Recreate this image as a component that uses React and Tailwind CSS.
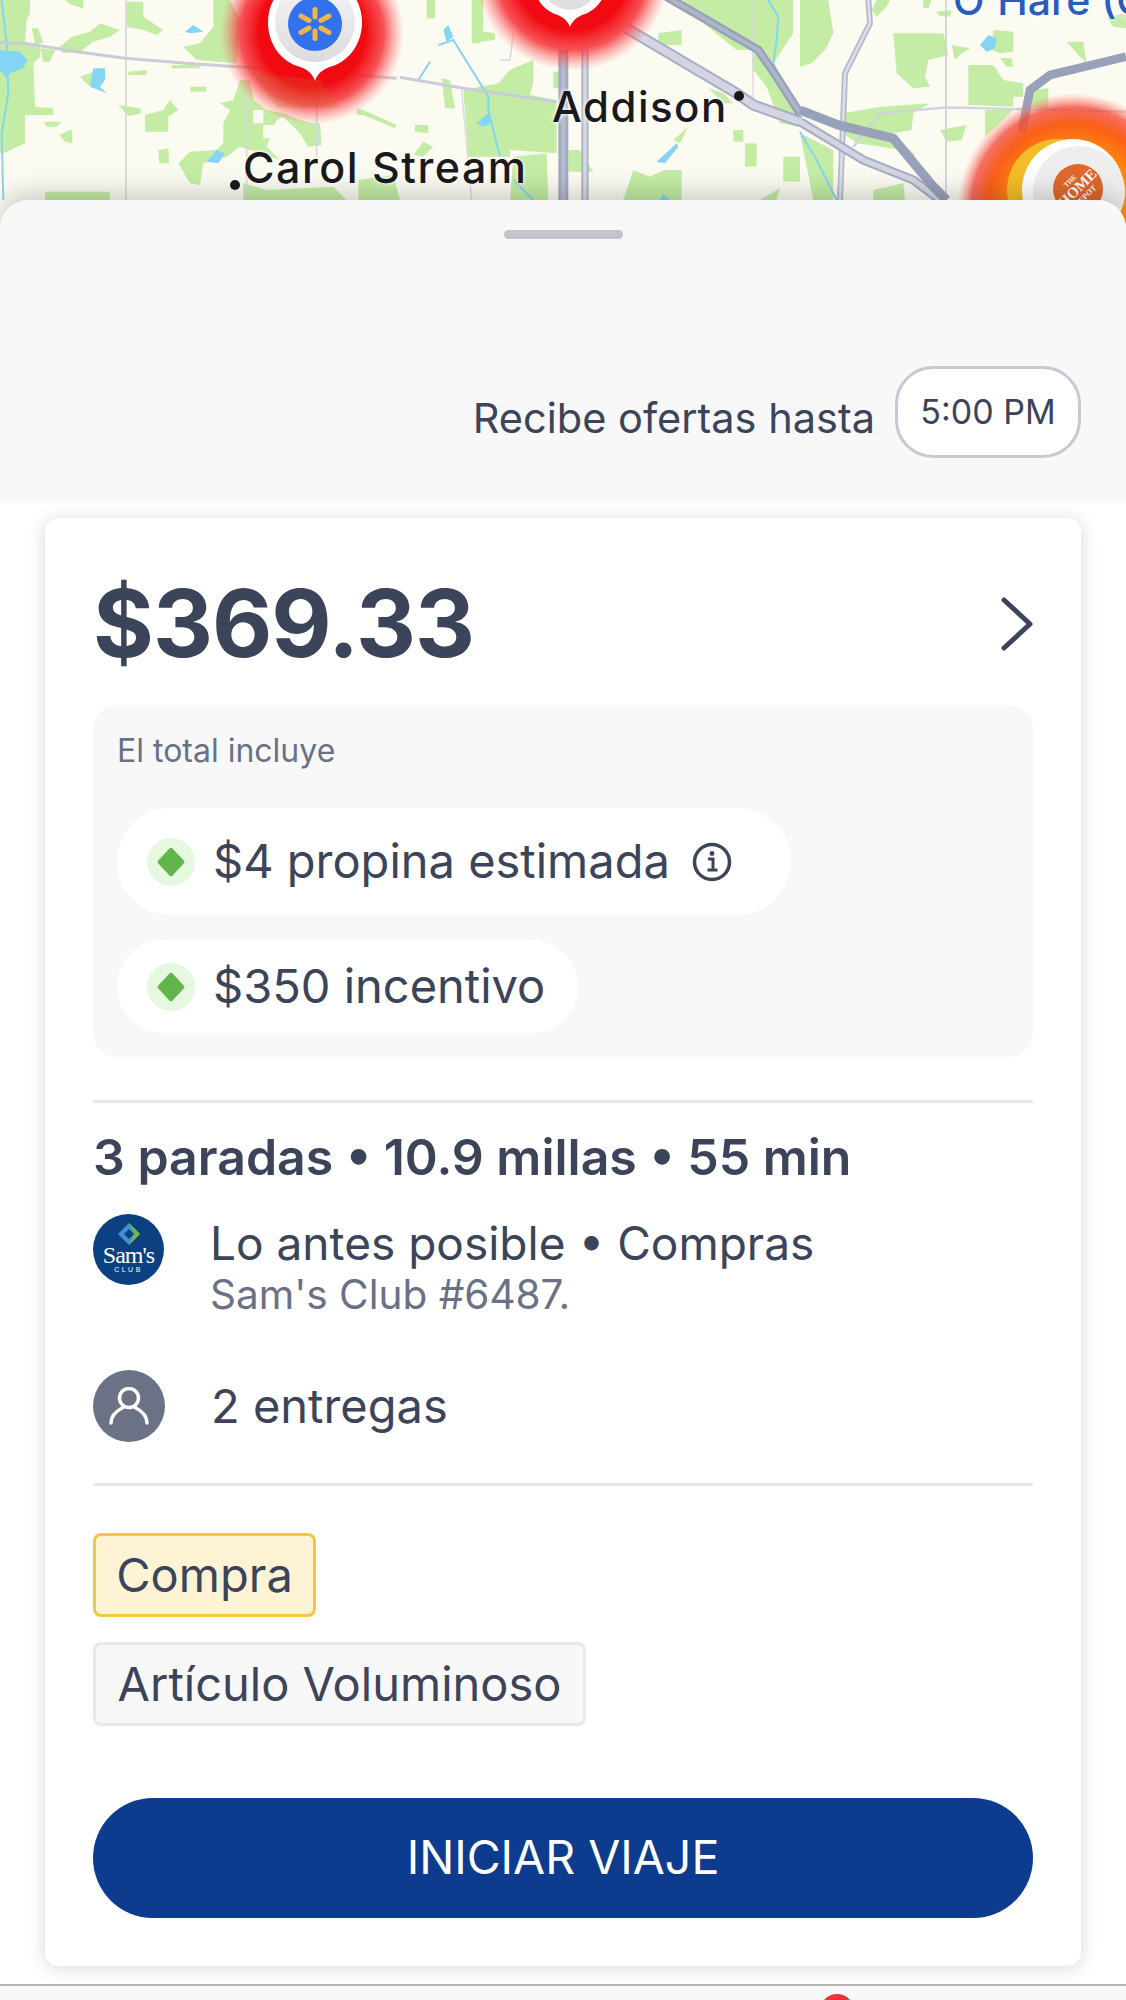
const GREEN = '#c4eca4'
const WATER = '#86d4f3'

// map patches, traced in 3x crop coordinates (left, middle and right third of the map)
const greensLeft = [
  '20,0 90,0 90,40 80,60 75,130 120,130 120,170 100,190 105,320 160,325 160,345 75,345 75,430 10,460 0,460 0,0',
  '95,85 115,85 130,130 105,130', '120,145 165,150 150,185 130,185',
  '175,145 215,110 270,95 300,70 330,80 360,90 330,110 280,125 240,155 190,160',
  '195,0 250,0 250,25 215,15', '380,5 430,5 430,50 490,90 470,105 430,90 380,80',
  '640,0 690,0 720,60 710,190 590,180 550,140 600,130 640,80',
  '515,195 600,195 600,205 515,205', '385,215 440,210 440,225 385,225', '240,230 280,215 280,260 265,255',
  '570,260 618,260 618,275 570,275', '355,315 420,325 425,340 385,348',
  '435,345 490,330 510,300 535,330 505,350 505,395 435,395', '130,365 185,365 170,380 140,380',
  '178,405 215,388 218,430 195,425', '475,450 505,445 507,490 478,490',
  '535,490 570,455 650,450 670,430 670,370 690,330 660,310 700,300 720,240 750,240 760,300 800,330 850,340 900,360 940,370 960,370 965,435 925,440 900,400 880,380 850,350 830,360 800,440 840,480 720,440 680,470 610,490 600,555 570,550',
  '135,575 330,575 330,600 135,600', '730,550 800,570 1000,560 1040,600 730,600', '1075,540 1180,525 1200,600 1075,600',
  '1070,325 1090,330 1190,375 1185,385 1090,345 1070,345',
]
const greensMiddle = [
  '80,0 105,0 105,55 80,55', '215,0 250,0 250,95 285,100 285,120 240,125 240,130 215,130',
  '125,235 150,240 165,325 135,325', '190,270 295,250 330,210 400,180 400,250 390,285 470,300 470,460 330,450 330,470 205,470',
  '340,470 440,460 445,600 330,600', '45,375 85,375 85,400 45,395', '40,465 70,425 100,440 70,470',
  '460,215 480,215 480,265 460,265', '505,450 540,450 580,515 505,515', '775,100 845,90 845,135 775,135',
  '850,0 1180,0 1180,100 1120,190 1200,350 1200,380 1140,370 1100,260 1060,210 1060,150 1010,150 850,20',
  '925,265 970,280 1000,310 970,310', '1000,390 1030,390 1030,425 1000,425', '1035,430 1070,430 1070,500 1035,500',
  '1150,470 1200,470 1200,545 1150,545', '820,420 865,380 840,430', '670,600 700,510 750,530 790,510 845,510 845,600',
  '1080,600 1140,565 1130,600',
]
const greensRight = [
  '0,0 85,0 100,100 75,150 35,190 0,200', '230,0 270,0 260,20 230,50 215,30',
  '280,100 430,100 445,165 385,180 375,230 390,260 340,265 290,220', '370,0 395,0 385,25 370,25', '410,35 455,30 450,50 420,48',
  '455,135 510,145 480,165 465,180', '580,90 640,95 640,155 600,160 575,150', '800,125 850,125 860,190 835,165',
  '505,195 580,195 610,240 670,250 670,290 640,290 640,320 505,315', '600,175 635,175 640,200 620,200',
  '690,270 745,265 745,330 690,320', '555,330 640,330 555,410',
  '130,340 240,320 390,310 340,340 335,390 280,400 350,470 310,450 170,430 130,400',
  '420,390 500,375 485,420 440,425', '220,570 310,550 315,600 220,600', '0,400 60,430 100,450 100,600 40,600',
  '920,50 978,40 978,85 940,80',
]

function Patches({ items, fill }) {
  return items.map((points) => <polygon key={points} points={points} fill={fill} />)
}

function MapBackdrop() {
  return (
    <svg className="absolute inset-0" width="1126" height="224" viewBox="0 0 1126 224" fill="none">
      <defs>
        <radialGradient id="redGlow">
          <stop offset="0.58" stopColor="#f20a12" />
          <stop offset="0.78" stopColor="#f4262c" stopOpacity="0.8" />
          <stop offset="1" stopColor="#ff6a6a" stopOpacity="0" />
        </radialGradient>
        <radialGradient id="orangeGlow">
          <stop offset="0.5" stopColor="#ff8f0c" />
          <stop offset="0.74" stopColor="#fa5f18" />
          <stop offset="0.88" stopColor="#f4483c" stopOpacity="0.78" />
          <stop offset="1" stopColor="#ff8a7a" stopOpacity="0" />
        </radialGradient>
        <linearGradient id="pinFill" x1="0" y1="0" x2="0" y2="1">
          <stop offset="0" stopColor="#f4f4f5" />
          <stop offset="1" stopColor="#dcdcde" />
        </linearGradient>
      </defs>

      <rect width="1126" height="224" fill="#fcfbf2" />

      <g transform="scale(0.3333)">
        <Patches items={greensLeft} fill={GREEN} />
        <polygon points="760,330 790,330 790,370 760,370" fill="#fcfbf2" />
        <polygon points="790,375 825,375 820,415 790,415" fill="#fcfbf2" />
        <path d="M5 0l15 130 5 150-20 120 5 200" stroke={WATER} strokeWidth="6" />
        <Patches items={['0,150 60,155 82,180 70,205 30,220 20,235 0,210', '280,205 315,205 315,240 300,260 320,280 270,260', '555,95 580,75 610,95 570,100', '620,485 650,450 675,460 655,490']} fill={WATER} />
        <path d="M378 0v600M740 240v360M950 240v230" stroke="#d5d8e0" strokeWidth="5" />
        <path d="M0 128l75 2 155 25 145 20 185 15 150 10 230 15 250 20" stroke="#c9cdd8" strokeWidth="9" />
      </g>

      <g transform="translate(400 0) scale(0.3333)">
        <Patches items={greensMiddle} fill={GREEN} />
        <Patches items={['130,90 145,75 160,110 140,125', '230,370 265,340 275,370 250,380', '770,485 830,430 835,440 795,490', '780,600 790,580 810,600']} fill={WATER} />
        <path d="M115 135l45-15 105 170v40l35 140M55 240l35-55M1105 0l30 50-5 70-10 70 80 160M340 540l60 60" stroke={WATER} strokeWidth="6" />
        <path d="M185 270l30 330M300 180h30l10-80M1055 0l5 300" stroke="#d5d8e0" strokeWidth="4" />
        <path d="M0 232l190 33 280 40" stroke="#c9cdd8" strokeWidth="9" />
        <path d="M490 150v450" stroke="#a2aac0" strokeWidth="30" />
        <path d="M490 150v450" stroke="#b5bbcd" strokeWidth="14" />
        <path d="M555 150v450" stroke="#aeb4c8" strokeWidth="22" />
        <path d="M555 150v450" stroke="#d6d9e3" strokeWidth="10" />
        <path d="M680 85l330 195 50 35 140 50" stroke="#a8aec3" strokeWidth="34" />
        <path d="M680 85l330 195 50 35 140 50" stroke="#d3d6e2" strokeWidth="22" />
        <path d="M800-10l275 160 55 80 70 110" stroke="#98a1ba" strokeWidth="26" />
        <path d="M800-10l275 160 55 80 70 110" stroke="#aeb5c9" strokeWidth="12" />
      </g>

      <g transform="translate(800 0) scale(0.3333)">
        <Patches items={greensRight} fill={GREEN} />
        <polygon points="540,135 565,105 590,115 585,145 560,155" fill={WATER} />
        <path d="M0 395l50 85 60 120" stroke={WATER} strokeWidth="6" />
        <path d="M438 0v600" stroke="#ccd0da" strokeWidth="5" />
        <path d="M240 340l200-18 538 13M240 340l-80 100" stroke="#cfd2dc" strokeWidth="7" />
        <path d="M205 0l5 70-75 150-15 380" stroke="#b3b9cc" strokeWidth="18" />
        <path d="M205 0l5 70-75 150-15 380" stroke="#dcdfe8" strokeWidth="8" />
        <path d="M0 365l190 115 150 60 80 60" stroke="#a8aec3" strokeWidth="28" />
        <path d="M0 365l190 115 150 60 80 60" stroke="#d3d6e2" strokeWidth="15" />
        <path d="M0 330l115 45 165 40 120 145 40 40" stroke="#98a1ba" strokeWidth="28" />
        <path d="M978 170l-228 55-60 45-25 130" stroke="#98a1ba" strokeWidth="26" />
      </g>

      {/* walmart pin */}
      <circle cx="312" cy="33" r="92" fill="url(#redGlow)" />
      <polygon points="252,73 320,80 339,107 277,107" fill="#c4712e" opacity="0.22" />
      <path d="M315 81c-3-9-10-13-18-15-17-6-29-23-29-44 0-26 21-47 47-47s47 21 47 47c0 21-12 38-29 44-8 2-15 6-18 15z" fill="#fff" />
      <circle cx="315" cy="22" r="40" fill="url(#pinFill)" />
      <circle cx="315" cy="24" r="27" fill="#3372ee" />
      <path d="M315 9.5V17M315 31v7.500M301 16l8 4.500M329 16l-8 4.500M301 32.500l8-4.500M329 32.500l-8-4.500" stroke="#eeb548" strokeWidth="5" strokeLinecap="round" />

      {/* second pin */}
      <circle cx="572" cy="-26" r="97" fill="url(#redGlow)" />
      <path d="M570 27c-3-8-9-11-15-13-13-5-22-18-22-34h74c0 16-9 29-22 34-6 2-12 5-15 13z" fill="#fff" />
      <circle cx="570" cy="-18" r="28" fill="#dfdfe1" />

      {/* home depot pin */}
      <circle cx="1073" cy="209" r="116" fill="url(#orangeGlow)" />
      <circle cx="1058" cy="190" r="51" fill="#f4bd26" />
      <circle cx="1073" cy="190" r="51" fill="#fff" />
      <circle cx="1079" cy="192" r="46" fill="#eeeeef" />
      <circle cx="1078" cy="189" r="25" fill="#e0682c" />
      <g transform="rotate(-45 1078 189)" fontFamily="Liberation Serif, serif" fontWeight="700" fill="#fff" textAnchor="middle">
        <text x="1078" y="180" fontSize="7">THE</text>
        <text x="1078" y="193" fontSize="15">HOME</text>
        <text x="1078" y="202" fontSize="8">DEPOT</text>
      </g>
    </svg>
  )
}

function Diamond() {
  return (
    <span className="flex h-12 w-12 shrink-0 items-center justify-center rounded-full bg-[#e6f9e0]">
      <svg width="30" height="30" viewBox="0 0 30 30">
        <path d="M13.4 1.6a2 2 0 013.2 0l11.3 12.1a2 2 0 010 2.6L16.6 28.4a2 2 0 01-3.2 0L2.1 16.3a2 2 0 010-2.6z" fill="#62b54a" />
      </svg>
    </span>
  )
}

function SamsLogo() {
  return (
    <svg width="71" height="71" viewBox="0 0 71 71" className="shrink-0">
      <circle cx="35.5" cy="35.5" r="35.5" fill="#0c4080" />
      <path d="M36 9l11 11-11 11-11-11z" fill="#3f8fd6" />
      <path d="M36 9l11 11-11 11 5-11z" fill="#74b843" />
      <path d="M36 15l5 5-5 5-5-5z" fill="#0c4080" />
      <text x="35.5" y="49" textAnchor="middle" fontFamily="Liberation Serif, serif" fontSize="24" letterSpacing="-1" fill="#fff">Sam's</text>
      <text x="35.5" y="58" textAnchor="middle" fontFamily="Liberation Sans, sans-serif" fontSize="7" letterSpacing="2.5" fill="#fff">CLUB</text>
    </svg>
  )
}

export default function App() {
  return (
    <div className="flex h-[2000px] w-[1126px] flex-col overflow-hidden bg-white font-['Inter',sans-serif] text-[#3c4459]">
      {/* map */}
      <div className="relative h-[224px] shrink-0 overflow-hidden">
        <MapBackdrop />
        <span className="absolute left-[953px] top-[-24px] whitespace-nowrap text-[41px] font-medium leading-[48px] text-[#2a5cc0] [text-shadow:0_0_6px_#fff,0_0_10px_#fff]">O'Hare (C</span>
        <span className="absolute left-[552px] top-[82px] text-[42px] font-medium leading-[50px] tracking-[1.5px] text-[#1a1a1c] [text-shadow:0_0_3px_#fff,0_0_5px_#fff]">Addison</span>
        <span className="absolute left-[734px] top-[91px] h-[10px] w-[10px] rounded-full bg-[#1a1a1c]" />
        <span className="absolute left-[243px] top-[142px] text-[43px] font-medium leading-[50px] tracking-[1.5px] text-[#1a1a1c] [text-shadow:0_0_3px_#fff,0_0_5px_#fff]">Carol Stream</span>
        <span className="absolute left-[230px] top-[180px] h-[10px] w-[10px] rounded-full bg-[#1a1a1c]" />
      </div>

      {/* bottom sheet */}
      <div className="relative -mt-[24px] flex h-[303px] shrink-0 flex-col rounded-t-[28px] bg-[#f8f8f9] shadow-[0_-8px_24px_rgba(0,0,0,0.18)]">
        <div className="mx-auto mt-[30px] h-[9px] w-[119px] rounded-full bg-[#c2c3cc]" />
        <div className="mt-[127px] flex items-center justify-end pr-[45px]">
          <span className="mt-[12px] text-[41.5px] leading-[48px]">Recibe ofertas hasta</span>
          <span className="ml-[20px] flex h-[92px] w-[186px] items-center justify-center rounded-[38px] border-[3px] border-[#c8c8d4] bg-white pb-[2px] text-[34px]">5:00 PM</span>
        </div>
      </div>

      <div className="relative flex-1 bg-white pt-[15px]">
        {/* offer card */}
        <div className="mx-[45px] flex h-[1448px] flex-col rounded-[14px] bg-white px-[48px] shadow-[0_2px_18px_rgba(0,0,0,0.16)]">
          <div className="flex h-[187px] shrink-0 items-center justify-between pt-[24px]">
            <span className="text-[93px] font-bold leading-none tracking-[-1px]">$369.33</span>
            <svg width="32" height="54" viewBox="0 0 32 54" fill="none">
              <path d="M3 3l26 24L3 51" stroke="#3c4459" strokeWidth="5" strokeLinecap="round" strokeLinejoin="round" />
            </svg>
          </div>

          <div className="flex h-[352px] shrink-0 flex-col items-start rounded-[24px] bg-[#f8f8f9] px-[24px] pt-[26px]">
            <span className="text-[32px] leading-[40px] text-[#6b7185]">El total incluye</span>
            <div className="mt-[37px] flex h-[107px] w-[674px] items-center rounded-full bg-white pl-[30px]">
              <Diamond />
              <span className="ml-[18px] text-[47px]">$4 propina estimada</span>
              <svg className="ml-[22px]" width="40" height="40" viewBox="0 0 40 40" fill="none">
                <circle cx="20" cy="20" r="17.5" stroke="#3c4459" strokeWidth="3.5" />
                <path d="M16 17h5v11M15.5 28h10" stroke="#3c4459" strokeWidth="3" />
                <circle cx="20" cy="11.5" r="2.4" fill="#3c4459" />
              </svg>
            </div>
            <div className="mt-[25px] flex h-[93px] w-[461px] items-center rounded-full bg-white pl-[30px]">
              <Diamond />
              <span className="ml-[18px] text-[47px]">$350 incentivo</span>
            </div>
          </div>

          <div className="mt-[43px] h-[3px] shrink-0 bg-[#e7e8ea]" />

          <div className="mt-[25px] text-[50px] font-semibold leading-[58px]">3 paradas • 10.9 millas • 55 min</div>

          <div className="mt-[28px] flex items-start gap-[46px]">
            <SamsLogo />
            <div className="mt-[1px] flex flex-col">
              <span className="text-[46px] leading-[56px]">Lo antes posible • Compras</span>
              <span className="mt-[1px] text-[40.5px] leading-[46px] text-[#6b7185]">Sam's Club #6487.</span>
            </div>
          </div>

          <div className="mt-[52px] flex items-center gap-[46px]">
            <span className="flex h-[72px] w-[72px] shrink-0 items-center justify-center rounded-full bg-[#6c7285]">
              <svg width="40" height="38" viewBox="0 0 40 38" fill="none">
                <circle cx="20" cy="11" r="9.5" stroke="#fff" strokeWidth="3.5" />
                <path d="M2 36c0-9 7-13 12-15.500M38 36c0-9-7-13-12-15.500" stroke="#fff" strokeWidth="3.500" strokeLinecap="round" />
              </svg>
            </span>
            <span className="text-[47px] leading-[56px]">2 entregas</span>
          </div>

          <div className="mt-[41px] h-[3px] shrink-0 bg-[#e7e8ea]" />

          <div className="mt-[47px] flex h-[84px] w-[223px] items-center justify-center rounded-[8px] border-[3px] border-[#f6c544] bg-[#fff3d6] text-[47px]">Compra</div>
          <div className="mt-[25px] flex h-[84px] w-[493px] items-center justify-center rounded-[8px] border-[3px] border-[#e9e9ec] bg-[#f8f8f9] text-[47px]">Artículo Voluminoso</div>

          <button className="mt-[72px] flex h-[120px] shrink-0 items-center justify-center rounded-[60px] bg-[#0d3b8e] text-[46.500px] text-white">INICIAR VIAJE</button>
        </div>

        {/* tab bar */}
        <div className="relative mt-[18px] h-[30px] overflow-hidden border-t-2 border-[#b5b5b8] bg-[#f8f8f9]">
          <span className="absolute left-[820px] top-[8px] h-[34px] w-[34px] rounded-full bg-[#f0303c]" />
        </div>
      </div>
    </div>
  )
}
